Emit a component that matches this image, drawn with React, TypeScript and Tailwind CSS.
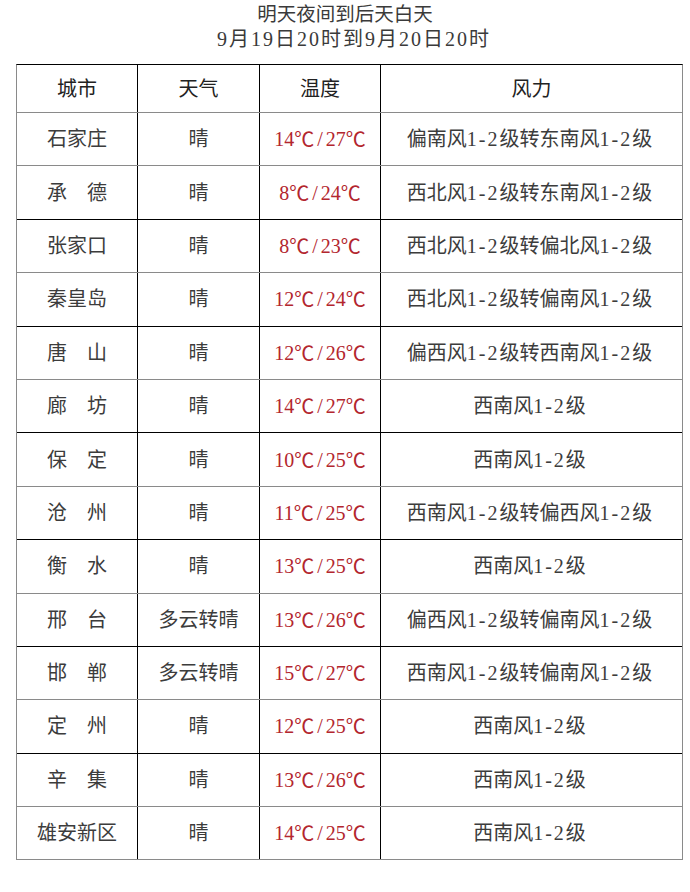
import React from "react";

type Row = { city: string; weather: string; lo: string; hi: string; wind: string };

const rows: Row[] = [
  { city: "石家庄", weather: "晴", lo: "14", hi: "27", wind: "偏南风1-2级转东南风1-2级" },
  { city: "承　德", weather: "晴", lo: "8", hi: "24", wind: "西北风1-2级转东南风1-2级" },
  { city: "张家口", weather: "晴", lo: "8", hi: "23", wind: "西北风1-2级转偏北风1-2级" },
  { city: "秦皇岛", weather: "晴", lo: "12", hi: "24", wind: "西北风1-2级转偏南风1-2级" },
  { city: "唐　山", weather: "晴", lo: "12", hi: "26", wind: "偏西风1-2级转西南风1-2级" },
  { city: "廊　坊", weather: "晴", lo: "14", hi: "27", wind: "西南风1-2级" },
  { city: "保　定", weather: "晴", lo: "10", hi: "25", wind: "西南风1-2级" },
  { city: "沧　州", weather: "晴", lo: "11", hi: "25", wind: "西南风1-2级转偏西风1-2级" },
  { city: "衡　水", weather: "晴", lo: "13", hi: "25", wind: "西南风1-2级" },
  { city: "邢　台", weather: "多云转晴", lo: "13", hi: "26", wind: "偏西风1-2级转偏南风1-2级" },
  { city: "邯　郸", weather: "多云转晴", lo: "15", hi: "27", wind: "西南风1-2级转偏南风1-2级" },
  { city: "定　州", weather: "晴", lo: "12", hi: "25", wind: "西南风1-2级" },
  { city: "辛　集", weather: "晴", lo: "13", hi: "26", wind: "西南风1-2级" },
  { city: "雄安新区", weather: "晴", lo: "14", hi: "25", wind: "西南风1-2级" },
];

const font = { fontFamily: '"Liberation Serif", "Noto Sans CJK SC", serif' };
const cjk = { fontFamily: '"Noto Sans CJK SC", sans-serif' };

function Wind({ text }: { text: string }) {
  const parts = text.split(/(1-2)/);
  return (
    <>
      {parts.map((p, i) =>
        p === "1-2" ? (
          <span key={i} className="tracking-[2px]">
            1-2
          </span>
        ) : (
          <span key={i}>{p}</span>
        )
      )}
    </>
  );
}

function Deg() {
  return (
    <span className="inline-block w-[20px] text-center" style={cjk}>
      ℃
    </span>
  );
}

export default function App() {
  return (
    <div className="w-[690px] h-[892px] bg-white text-[#3c3c3c]" style={font}>
      <div className="pt-[3px] text-center text-[20px] leading-[24px] text-[#3a3a3a]">
        <div className="text-[19.5px]">明天夜间到后天白天</div>
        <div className="pl-[18px] tracking-[2px]">9月19日20时到9月20日20时</div>
      </div>
      <div className="mt-[13px] ml-[16px] w-[667px] border-l border-l-[#8a8a8a] border-r border-r-[#8a8a8a] border-t border-t-black">
        <div className="flex h-[48px] border-b border-b-[#8a8a8a] text-[20px] text-[#222]">
          <div className="w-[121px] border-r border-r-black flex items-center justify-center">城市</div>
          <div className="w-[122px] border-r border-r-black flex items-center justify-center">天气</div>
          <div className="w-[121px] border-r border-r-black flex items-center justify-center">温度</div>
          <div className="flex-1 flex items-center justify-center">风力</div>
        </div>
        {rows.map((r, i) => (
          <div
            key={i}
            className={
              "flex h-[53.4px] text-[20px] " +
              (i % 2 === 1 && i !== rows.length - 1
                ? "border-b border-b-black"
                : "border-b border-b-[#8a8a8a]")
            }
          >
            <div className="w-[121px] border-r border-r-black flex items-center justify-center whitespace-pre">
              {r.city}
            </div>
            <div className="w-[122px] border-r border-r-black flex items-center justify-center">
              {r.weather}
            </div>
            <div className="w-[121px] border-r border-r-black flex items-center justify-center text-[#b3262e] whitespace-nowrap">
              <span>{r.lo}</span>
              <Deg />
              <span className="mx-[3px]">/</span>
              <span>{r.hi}</span>
              <Deg />
            </div>
            <div className="flex-1 flex items-center justify-center whitespace-nowrap pr-[4px]">
              <Wind text={r.wind} />
            </div>
          </div>
        ))}
      </div>
    </div>
  );
}
